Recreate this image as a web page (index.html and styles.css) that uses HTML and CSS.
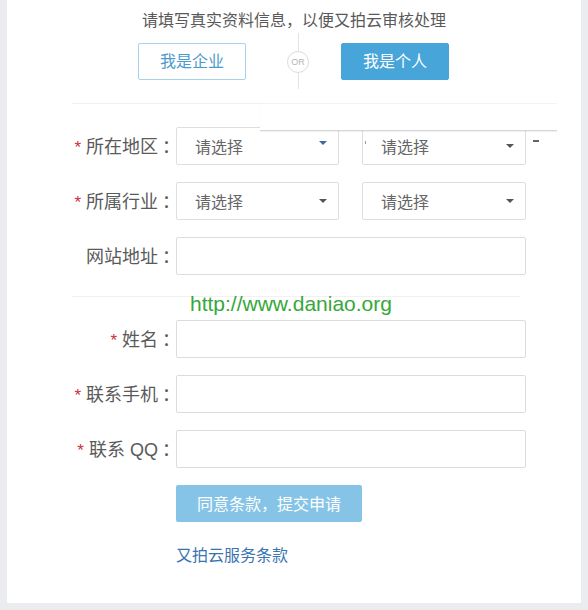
FILE: index.html
```html
<!DOCTYPE html>
<html lang="zh-CN">
<head>
<meta charset="utf-8">
<title>又拍云 认证</title>
<link rel="stylesheet" href="styles.css">
</head>
<body>
<div class="card">
  <div class="title">请填写真实资料信息<span class="punc">，</span>以便又拍云审核处理</div>
  <div class="choice">
    <div class="btn btn-outline">我是企业</div>
    <div class="or"><span class="or-line"></span><span class="or-circle">OR</span><span class="or-line or-line-b"></span></div>
    <div class="btn btn-fill">我是个人</div>
  </div>
  <div class="divider divider-top"></div>

  <div class="group group-first">
    <div class="row">
      <div class="label"><span class="star">*</span>所在地区<span class="colon">：</span></div>
      <div class="select select-a"><span>请选择</span><span class="arrow arrow-blue"></span></div>
      <div class="select select-b"><span class="tick"></span><span>请选择</span><span class="arrow"></span></div>
    </div>
    <div class="row">
      <div class="label"><span class="star">*</span>所属行业<span class="colon">：</span></div>
      <div class="select select-a"><span>请选择</span><span class="arrow"></span></div>
      <div class="select select-b"><span>请选择</span><span class="arrow"></span></div>
    </div>
    <div class="row">
      <div class="label">网站地址<span class="colon">：</span></div>
      <div class="input"></div>
    </div>
  </div>

  <div class="divider divider-bottom"></div>

  <div class="group">
    <div class="row">
      <div class="label"><span class="star">*</span>姓名<span class="colon">：</span></div>
      <div class="input"></div>
    </div>
    <div class="row">
      <div class="label"><span class="star">*</span>联系手机<span class="colon">：</span></div>
      <div class="input"></div>
    </div>
    <div class="row">
      <div class="label"><span class="star">*</span>联系 QQ<span class="colon">：</span></div>
      <div class="input"></div>
    </div>
  </div>

  <div class="submit">同意条款<span class="punc">，</span>提交申请</div>
  <div class="terms">又拍云服务条款</div>

  <div class="overlay"></div>
  <div class="dash"></div>
  <div class="watermark">http://www.daniao.org</div>
</div>
</body>
</html>
```

FILE: styles.css
```css
html, body {
  margin: 0;
  padding: 0;
}
body {
  background: #ebecf0;
  width: 588px;
  height: 610px;
  overflow: hidden;
  font-family: "Liberation Sans", "Noto Sans CJK SC", sans-serif;
  color: #555;
}
.card {
  position: relative;
  margin-left: 7px;
  width: 574px;
  height: 603px;
  background: #fff;
  padding-top: 8px;
  box-sizing: border-box;
}
.title {
  height: 22px;
  font-size: 16px;
  line-height: 22px;
  text-align: center;
  color: #595959;
}
.punc {
  font-family: "Noto Sans CJK TC", sans-serif;
}
.choice {
  display: flex;
  align-items: center;
  height: 56px;
  margin-top: 3px;
  padding-left: 131px;
}
.btn {
  width: 108px;
  height: 37px;
  box-sizing: border-box;
  border-radius: 2px;
  font-size: 16px;
  line-height: 35px;
  text-align: center;
}
.btn-outline {
  border: 1px solid #a9d3e8;
  color: #4c9bcd;
  background: #fff;
}
.btn-fill {
  border: 1px solid #47a5da;
  background: #47a5da;
  color: #fff;
}
.or {
  display: flex;
  flex-direction: column;
  align-items: center;
  width: 22px;
  height: 56px;
  margin: 0 32px 0 41px;
}
.or-line {
  width: 1px;
  height: 18px;
  background: #e3e3e3;
}
.or-line-b {
  height: 16px;
}
.or-circle {
  width: 22px;
  height: 22px;
  box-sizing: border-box;
  border: 1px solid #dcdcdc;
  border-radius: 50%;
  font-size: 9px;
  line-height: 20px;
  text-align: center;
  color: #b5b5b5;
}
.divider {
  height: 1px;
  background: #f1f1f1;
}
.divider-top {
  margin-top: 14px;
  margin-left: 65px;
  width: 484px;
}
.divider-bottom {
  margin-top: 21px;
  margin-left: 65px;
  width: 448px;
}
.group {
  display: flex;
  flex-direction: column;
  gap: 17px;
  margin-top: 23px;
}
.row {
  display: flex;
  align-items: center;
  height: 38px;
}
.label {
  width: 169px;
  flex: none;
  text-align: right;
  font-size: 18px;
  line-height: 24px;
  color: #5a5a5a;
  white-space: nowrap;
}
.star {
  color: #c9313a;
  font-size: 17px;
  margin-right: 5px;
}
.colon {
  font-family: "Noto Sans CJK TC", sans-serif;
  padding-left: 4px;
  margin-right: -4px;
}
.select {
  display: flex;
  align-items: center;
  justify-content: space-between;
  height: 38px;
  box-sizing: border-box;
  border: 1px solid #dedede;
  border-radius: 2px;
  padding: 0 11px 0 18px;
  font-size: 16px;
  color: #666;
  background: #fff;
}
.select-a {
  width: 163px;
  margin-right: 23px;
}
.select-b {
  width: 164px;
}
.arrow {
  width: 0;
  height: 0;
  border-left: 4px solid transparent;
  border-right: 4px solid transparent;
  border-top: 4px solid #555;
}
.arrow-blue {
  border-top-color: #3d6b99;
  margin-top: -6px;
}
.tick {
  position: absolute;
  width: 1px;
  height: 3px;
  margin-left: -16px;
  margin-top: -8px;
  background: #999;
}
.input {
  width: 350px;
  height: 38px;
  box-sizing: border-box;
  border: 1px solid #dcdcdc;
  border-radius: 2px;
  background: #fff;
}
.submit {
  margin-top: 17px;
  margin-left: 169px;
  width: 186px;
  height: 37px;
  border-radius: 2px;
  background: #86c4e7;
  color: #fff;
  font-size: 16px;
  line-height: 37px;
  text-align: center;
}
.terms {
  margin-top: 24px;
  margin-left: 169px;
  font-size: 16px;
  line-height: 20px;
  color: #3a74b0;
}
.overlay {
  position: absolute;
  left: 253px;
  top: 103px;
  width: 297px;
  height: 26px;
  background: #fff;
  border-top: 1px solid #f3f3f3;
  border-bottom: 1px solid #d6d6d6;
  box-shadow: 0 1px 1px rgba(0, 0, 0, 0.05);
  z-index: 2;
}
.dash {
  position: absolute;
  left: 526px;
  top: 140px;
  width: 6px;
  height: 2px;
  background: #666;
}
.watermark {
  position: absolute;
  left: 183px;
  top: 293px;
  font-family: "Liberation Sans", sans-serif;
  font-size: 21px;
  line-height: 21px;
  color: #35a83a;
  z-index: 3;
}
```
